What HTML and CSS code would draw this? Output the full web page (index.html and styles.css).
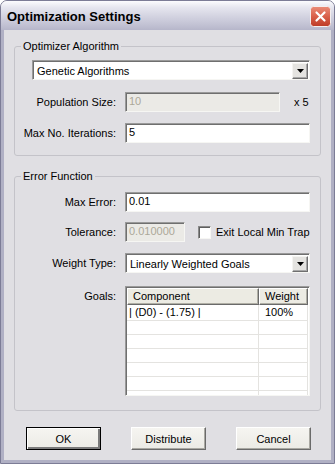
FILE: index.html
```html
<!DOCTYPE html>
<html lang="en">
<head>
    <meta charset="utf-8">
    <title>Optimization Settings</title>
    <link rel="stylesheet" href="styles.css">
</head>
<body>
    <div class="window">
        <div class="titlebar">
            <span class="title">Optimization Settings</span>
            <span class="close">
                <svg width="21" height="21" viewBox="0 0 21 21">
                    <defs>
                        <linearGradient id="closeGrad" x1="0" y1="0" x2="0" y2="1">
                            <stop offset="0" stop-color="#ea8c78"/>
                            <stop offset="0.5" stop-color="#d9604a"/>
                            <stop offset="1" stop-color="#bd3a26"/>
                        </linearGradient>
                    </defs>
                    <rect x="0.5" y="0.5" width="20" height="20" rx="3" fill="url(#closeGrad)" stroke="#f4eeee"/>
                    <path d="M6.5 6.5 L14.5 14.5 M14.5 6.5 L6.5 14.5" stroke="#fff" stroke-width="2.2" stroke-linecap="round"/>
                </svg>
            </span>
        </div>

        <div class="client">
            <fieldset class="group group-algo">
                <legend>Optimizer Algorithm</legend>
                <div class="combo combo-algo">
                    <span class="combo-text">Genetic Algorithms</span>
                    <span class="combo-btn"><svg width="7" height="4" viewBox="0 0 7 4"><polygon points="0,0 7,0 3.5,4" fill="#000"/></svg></span>
                </div>
                <div class="row row-pop">
                    <span class="lbl">Population Size:</span>
                    <div class="field">
                        <div class="edit edit-pop disabled">10</div>
                        <span class="mult">x 5</span>
                    </div>
                </div>
                <div class="row row-iter">
                    <span class="lbl">Max No. Iterations:</span>
                    <div class="edit">5</div>
                </div>
            </fieldset>

            <fieldset class="group group-error">
                <legend>Error Function</legend>
                <div class="row row-maxerr">
                    <span class="lbl">Max Error:</span>
                    <div class="edit">0.01</div>
                </div>
                <div class="row row-tol">
                    <span class="lbl">Tolerance:</span>
                    <div class="field">
                        <div class="edit edit-tol disabled">0.010000</div>
                        <span class="check"></span>
                        <span class="check-lbl">Exit Local Min Trap</span>
                    </div>
                </div>
                <div class="row row-weight">
                    <span class="lbl">Weight Type:</span>
                    <div class="combo">
                        <span class="combo-text">Linearly Weighted Goals</span>
                        <span class="combo-btn"><svg width="7" height="4" viewBox="0 0 7 4"><polygon points="0,0 7,0 3.5,4" fill="#000"/></svg></span>
                    </div>
                </div>
                <div class="row row-goals">
                    <span class="lbl lbl-goals">Goals:</span>
                    <div class="listview">
                        <div class="lv-head">
                            <span class="lv-hcell col-comp">Component</span>
                            <span class="lv-hcell col-weight">Weight</span>
                        </div>
                        <div class="lv-row first">
                            <span class="lv-cell col-comp">| (D0) - (1.75) |</span>
                            <span class="lv-cell col-weight">100%</span>
                        </div>
                        <div class="lv-row"><span class="lv-cell col-comp"></span><span class="lv-cell col-weight"></span></div>
                        <div class="lv-row"><span class="lv-cell col-comp"></span><span class="lv-cell col-weight"></span></div>
                        <div class="lv-row"><span class="lv-cell col-comp"></span><span class="lv-cell col-weight"></span></div>
                        <div class="lv-row"><span class="lv-cell col-comp"></span><span class="lv-cell col-weight"></span></div>
                        <div class="lv-row"><span class="lv-cell col-comp"></span><span class="lv-cell col-weight"></span></div>
                        <div class="lv-row"><span class="lv-cell col-comp"></span><span class="lv-cell col-weight"></span></div>
                    </div>
                </div>
            </fieldset>

            <div class="buttons">
                <span class="btn default">OK</span>
                <span class="btn">Distribute</span>
                <span class="btn">Cancel</span>
            </div>
        </div>
    </div>
</body>
</html>
```

FILE: styles.css
```css
/* Optimization Settings dialog */

* {
    box-sizing: border-box;
}

body {
    margin: 0;
    background: #fff;
    font-family: "Liberation Sans", Arial, sans-serif;
    font-size: 11px;
    color: #000;
}

.window {
    width: 335px;
    height: 464px;
    display: flex;
    flex-direction: column;
    border: 1px solid #7c7c96;
    border-radius: 7px 7px 0 0;
    background: #e0dfe3;
    overflow: hidden;
}

.titlebar {
    height: 29px;
    flex: none;
    display: flex;
    align-items: center;
    justify-content: space-between;
    padding: 0 3px 0 6px;
    background: linear-gradient(#fcfcfe 0%, #e6e6ef 22%, #d2d2e0 55%, #c0c0d2 85%, #b6b6ca 100%);
}

.title {
    font-weight: bold;
    font-size: 13px;
    color: #000;
    padding-top: 1px;
}

.close {
    width: 21px;
    height: 21px;
    display: flex;
    margin-top: 1px;
}

.client {
    flex: 1;
    display: flex;
    flex-direction: column;
    border: 3px solid #b0b0c4;
    border-top: none;
    padding: 10px 10px 0 10px;
}

/* group boxes */

.group {
    margin: 0;
    padding: 7px 10px 12px 0;
    border: 1px solid #c4c3c9;
    border-radius: 3px;
    min-width: 0;
}

.group legend {
    margin-left: 6px;
    padding: 0 2px;
    line-height: 13px;
}

.group-error {
    margin-top: 14px;
    padding-top: 9px;
    padding-bottom: 14px;
}

.row {
    display: grid;
    grid-template-columns: 101px 1fr;
    column-gap: 9px;
    align-items: center;
}

.row-pop { margin-top: 12px; }
.row-iter { margin-top: 11px; }
.row-tol { margin-top: 10px; }
.row-weight { margin-top: 11px; }
.row-goals {
    margin-top: 13px;
    align-items: start;
}

.lbl {
    text-align: right;
    white-space: nowrap;
}

.lbl-goals {
    padding-top: 4px;
}

.field {
    display: flex;
    align-items: center;
}

/* edits */

.edit {
    height: 20px;
    line-height: 16px;
    padding-left: 3px;
    background: #fff;
    border: 1px solid;
    border-color: #9a9a9a #f6f6f3 #f6f6f3 #9a9a9a;
    box-shadow: inset 1px 1px 0 #6f6f6f;
}

.edit.disabled {
    background: #ebeae6;
    color: #aca899;
}

.edit-pop {
    width: 155px;
}

.mult {
    margin-left: 14px;
}

.edit-tol {
    width: 60px;
}

.check {
    width: 13px;
    height: 13px;
    margin-left: 13px;
    background: #fff;
    border: 1px solid;
    border-color: #8a8a8a #f6f6f3 #f6f6f3 #8a8a8a;
    box-shadow: inset 1px 1px 0 #5f5f5f;
}

.check-lbl {
    margin-left: 5px;
}

/* combo boxes */

.combo {
    height: 20px;
    display: flex;
    align-items: center;
    background: #fff;
    border: 1px solid;
    border-color: #9a9a9a #f6f6f3 #f6f6f3 #9a9a9a;
    box-shadow: inset 1px 1px 0 #6f6f6f;
    padding: 1px 1px 0 2px;
}

.combo-algo {
    margin-left: 17px;
}

.combo-text {
    flex: 1;
    padding-left: 2px;
}

.combo-btn {
    width: 16px;
    height: 16px;
    display: flex;
    align-items: center;
    justify-content: center;
    background: #e4e3e0;
    border: 1px solid;
    border-color: #f4f4f1 #6f6f6f #6f6f6f #f4f4f1;
    box-shadow: inset -1px -1px 0 #a8a8a8;
}

/* list view */

.listview {
    height: 110px;
    overflow: hidden;
    background: #fff;
    border: 1px solid;
    border-color: #9a9a9a #f6f6f3 #f6f6f3 #9a9a9a;
    box-shadow: inset 1px 1px 0 #6f6f6f;
    padding: 1px 0 0 1px;
}

.lv-head,
.lv-row {
    display: flex;
}

.lv-hcell {
    height: 17px;
    line-height: 15px;
    padding-left: 5px;
    background: #ecebe3;
    border: 1px solid;
    border-color: #fff #6a6a6a #6a6a6a #fff;
    box-shadow: inset -1px -1px 0 #b0afa5;
}

.col-comp {
    width: 132px;
}

.col-weight {
    width: 49px;
}

.lv-row {
    height: 14px;
}

.lv-row.first {
    height: 16px;
}

.lv-cell {
    line-height: 14px;
    padding-left: 2px;
    border-bottom: 1px solid #e4e3e0;
    border-right: 1px solid #e4e3e0;
}

.lv-row.first .lv-cell {
    line-height: 15px;
}

.lv-cell.col-weight {
    padding-left: 6px;
}

/* buttons */

.buttons {
    display: flex;
    gap: 30px;
    margin-top: 16px;
    padding-left: 12px;
}

.btn {
    width: 75px;
    height: 23px;
    display: flex;
    align-items: center;
    justify-content: center;
    background: linear-gradient(#f6f5f1, #ebeae5);
    border: 1px solid;
    border-color: #fff #6a6a6a #6a6a6a #fff;
    box-shadow: inset -1px -1px 0 #a9a8a2;
}

.btn.default {
    border: 1px solid #000;
    box-shadow: inset 1px 1px 0 #fff, inset -2px -2px 0 #7a7a7a;
}
```
